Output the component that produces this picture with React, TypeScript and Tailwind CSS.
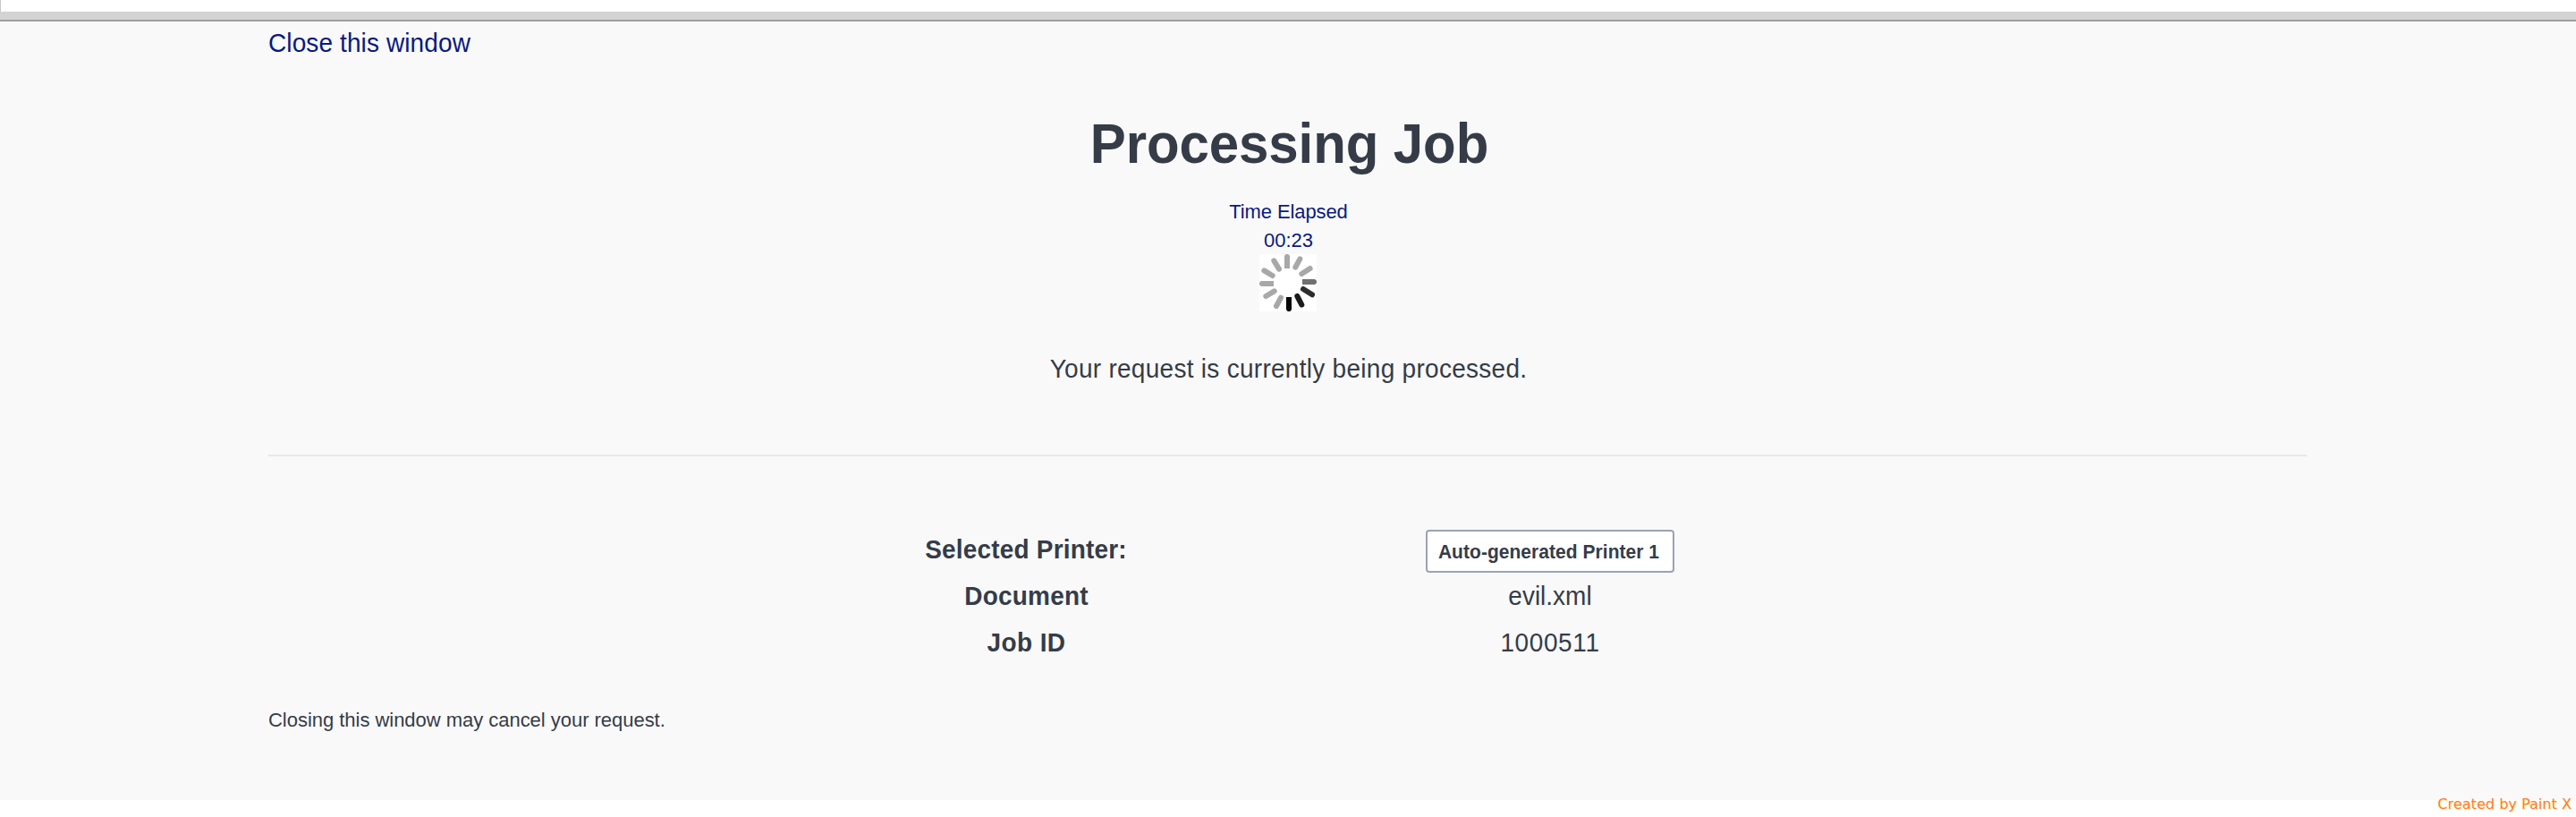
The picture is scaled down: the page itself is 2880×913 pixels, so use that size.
const diagonals = [
  { x1: 136, y1: 16, x2: 121, y2: 44, color: "#a8a8a8" },
  { x1: 170, y1: 48, x2: 142, y2: 66, color: "#a8a8a8" },
  { x1: 147, y1: 117, x2: 177, y2: 136, color: "#2d2d2d" },
  { x1: 127, y1: 141, x2: 142, y2: 170, color: "#1b1b1b" },
  { x1: 72, y1: 146, x2: 57, y2: 174, color: "#a8a8a8" },
  { x1: 50, y1: 124, x2: 22, y2: 141, color: "#a8a8a8" },
  { x1: 16, y1: 55, x2: 44, y2: 72, color: "#a8a8a8" },
  { x1: 49, y1: 22, x2: 66, y2: 50, color: "#a8a8a8" },
];

const straights = [
  { d: "M84 48V6l5-6h8l5 6v42z", color: "#a8a8a8" },
  { d: "M144 84h42l6 5v8l-6 5h-42z", color: "#707070" },
  { d: "M90 144v42l5 6h8l5-6v-42z", color: "#050505" },
  { d: "M48 90H6l-6 5v8l6 5h42z", color: "#a8a8a8" },
];

function Spinner() {
  return (
    <svg viewBox="0 0 192 192" className="block h-16 w-16 bg-white">
      {straights.map((s) => (
        <path key={s.d} d={s.d} fill={s.color} />
      ))}
      {diagonals.map((s, i) => (
        <line key={i} x1={s.x1} y1={s.y1} x2={s.x2} y2={s.y2} stroke={s.color} strokeWidth={18} strokeLinecap="round" />
      ))}
    </svg>
  );
}

export default function App() {
  return (
    <div className="relative flex h-[913px] w-[2880px] flex-col overflow-hidden bg-white font-['Liberation_Sans',Arial,sans-serif] text-[28px] leading-[52px] text-[#353c48]">
      <div className="h-[13px] shrink-0 border-l border-[#c8c8c8] bg-white" />
      <div className="h-[11px] shrink-0 border-b-2 border-[#9e9e9e] bg-[#d3d3d3]" />
      <main className="flex h-[870px] shrink-0 flex-col bg-[#f9f9f9] px-[300px]">
        <a href="#" className="-mt-px h-[52px] origin-[0_36px] scale-y-[1.08] self-start tracking-[0.11px] text-[#0a1a80]">Close this window</a>
        <h1 className="mt-[47px] h-[80px] origin-[50%_61px] scale-y-[1.04] pl-[3px] text-center text-[60px] leading-[80px] font-bold tracking-[-0.1px]">Processing Job</h1>
        <div className="mt-[18px] flex flex-col items-center text-[22px] leading-[32px] text-[#0a1a80]">
          <span className="h-8 pt-px pl-px tracking-[-0.1px]">Time Elapsed</span>
          <span className="h-8 pt-px pl-px">00:23</span>
          <Spinner />
        </div>
        <p className="mt-[39px] origin-[50%_36px] scale-y-[1.08] pl-px text-center tracking-[0.28px]">Your request is currently being processed.</p>
        <hr className="mt-[69px] mr-px border-t-2 border-[#e8e8e8]" />
        <dl className="mt-[78px] grid grid-cols-[586px_586px] justify-center text-center">
          <dt className="mt-px -mb-px origin-[50%_36px] scale-y-[1.08] font-bold tracking-[0.18px]">Selected Printer:</dt>
          <dd className="flex h-[52px] justify-center pt-1">
            <button className="h-12 w-[278px] rounded-[4px] border-2 border-[#9aa3b3] bg-white text-[21px] leading-[44px] font-bold">
              <span className="-ml-[3px] inline-block origin-[50%_29px] scale-y-[1.05] pt-px tracking-[0.04px]">Auto-generated Printer 1</span>
            </button>
          </dd>
          <dt className="mt-px -mb-px origin-[50%_36px] scale-y-[1.08] pl-px font-bold tracking-[0.2px]">Document</dt>
          <dd className="mt-px -mb-px origin-[50%_36px] scale-y-[1.08]">evil.xml</dd>
          <dt className="mt-px -mb-px origin-[50%_36px] scale-y-[1.08] pl-px font-bold tracking-[0.4px]">Job ID</dt>
          <dd className="mt-px -mb-px origin-[50%_36px] scale-y-[1.04] tracking-[0.6px]">1000511</dd>
        </dl>
        <p className="mt-[45px] text-[22px] leading-[32px] tracking-[-0.03px]">Closing this window may cancel your request.</p>
      </main>
      <span className="absolute right-[5px] bottom-[4px] font-['DejaVu_Sans',sans-serif] text-[16px] leading-[20px] tracking-[0.05px] text-[#ff7a40] [text-shadow:1px_1px_0_#fff38a]">Created by Paint X</span>
    </div>
  );
}
